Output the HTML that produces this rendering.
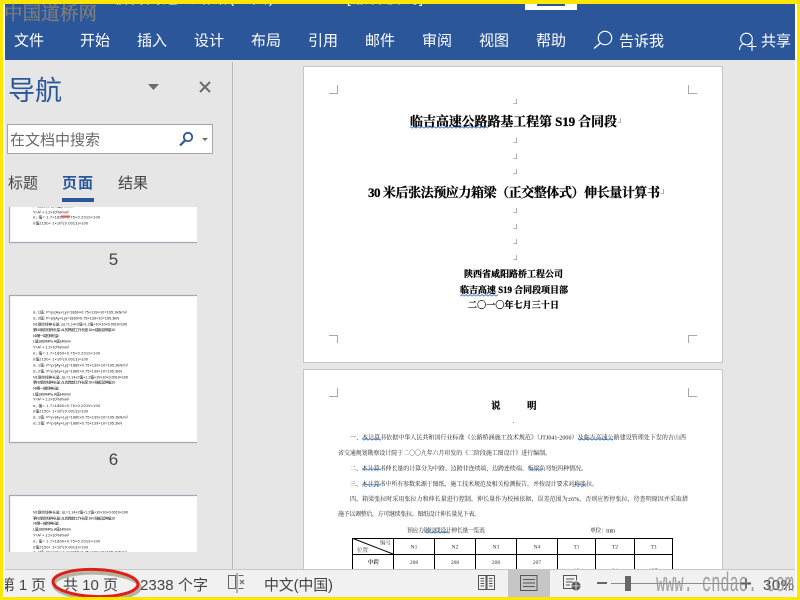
<!DOCTYPE html>
<html lang="zh-CN">
<head>
<meta charset="utf-8">
<title>Word</title>
<style>
html,body{margin:0;padding:0;background:#fff;width:800px;height:600px;overflow:hidden}
svg{display:block;position:absolute;left:0;top:0}
text{font-family:"Liberation Sans","Noto Sans CJK SC",sans-serif;white-space:pre}
.tab{fill:#fff;font-size:15px}
.st{fill:#444;font-size:15px}
.th{fill:#111;font-size:3.7px}
.d{fill:#222;font-family:"Liberation Serif","Noto Serif CJK SC",serif;font-size:6px}
.b{fill:#000;stroke:#000;stroke-width:.25px;font-family:"Liberation Serif","Noto Serif CJK SC",serif;font-weight:bold}
.c{fill:#333;font-family:"Liberation Serif","Noto Serif CJK SC",serif;font-size:5.5px;text-anchor:middle}
</style>
</head>
<body>
<svg width="800" height="600" viewBox="0 0 800 600" xmlns="http://www.w3.org/2000/svg">
<defs>
<pattern id="w" width="4" height="3" patternUnits="userSpaceOnUse"><path d="M0 2.2L2 .6L4 2.2" fill="none" stroke="#3f78c8" stroke-width=".9"/></pattern>
<clipPath id="t1"><rect x="9" y="207" width="188" height="36"/></clipPath>
<clipPath id="t3"><rect x="9" y="495" width="188" height="57"/></clipPath>
</defs>

<rect width="800" height="600" fill="#fff"/>
<rect x="5" y="4" width="790" height="56" fill="#2b579a"/>
<rect x="5" y="60" width="790" height="510" fill="#e6e6e6"/>

<!-- clipped title bar -->
<text x="113" y="3" fill="#fff" font-size="15" textLength="310" lengthAdjust="spacing">临吉高速公路路(正文) - Word  [兼容模式]</text>
<rect x="525" y="4" width="52" height="6" fill="#fff"/>
<rect x="537" y="4" width="28" height="2" fill="#2b579a"/>

<!-- ribbon tabs -->
<text class="tab" x="14" y="45.500" textLength="30">文件</text>
<text class="tab" x="80" y="45.500" textLength="30">开始</text>
<text class="tab" x="137" y="45.500" textLength="30">插入</text>
<text class="tab" x="194" y="45.500" textLength="30">设计</text>
<text class="tab" x="251" y="45.500" textLength="30">布局</text>
<text class="tab" x="308" y="45.500" textLength="30">引用</text>
<text class="tab" x="365" y="45.500" textLength="30">邮件</text>
<text class="tab" x="422" y="45.500" textLength="30">审阅</text>
<text class="tab" x="479" y="45.500" textLength="30">视图</text>
<text class="tab" x="536" y="45.500" textLength="30">帮助</text>
<text class="tab" x="619" y="46" textLength="45">告诉我</text>
<text class="tab" x="761" y="46" textLength="30">共享</text>
<circle cx="605" cy="38" r="6.700" fill="none" stroke="#fff" stroke-width="1.200"/>
<path d="M600.500 43L594 48.500" stroke="#fff" stroke-width="1.400" fill="none"/>
<circle cx="746.500" cy="39" r="5.800" fill="none" stroke="#fff" stroke-width="1.100"/>
<path d="M739.500 50c0-4 2.500-6 5-6.500M749 44.500h1" stroke="#fff" stroke-width="1.100" fill="none"/>
<path d="M752 42v9M747.500 46.500h9" stroke="#fff" stroke-width="1.100" fill="none"/>

<!-- navigation pane -->
<text x="8" y="100" fill="#2b579a" font-size="27" textLength="54">导航</text>
<path d="M148 84h11l-5.500 6z" fill="#6b6b6b"/>
<path d="M200 82l10 10M210 82l-10 10" stroke="#6b6b6b" stroke-width="2" fill="none"/>
<rect x="7.500" y="124.500" width="205" height="29" fill="#fff" stroke="#a6a6a6"/>
<text x="10" y="145" fill="#6a6a6a" font-size="15" textLength="90">在文档中搜索</text>
<circle cx="188" cy="137" r="4.200" fill="none" stroke="#2b579a" stroke-width="1.800"/>
<path d="M185 140.500l-5 5" stroke="#2b579a" stroke-width="2.200" fill="none"/>
<path d="M202 138h6l-3 3z" fill="#6b6b6b"/>
<text x="8" y="188" fill="#444" font-size="15" textLength="30">标题</text>
<text x="62" y="188" fill="#2b579a" font-size="15" font-weight="bold" textLength="31">页面</text>
<text x="118" y="188" fill="#444" font-size="15" textLength="30">结果</text>
<rect x="62" y="198" width="32" height="4" fill="#2b579a"/>

<!-- thumbnail 5 -->
<rect x="9" y="207" width="188" height="36" fill="#fff"/>
<path d="M9.500 207V242.500H197" fill="none" stroke="#a2a7b3" stroke-width="1.200"/>
<g clip-path="url(#t1)">
<text class="th" x="33" y="207.500" textLength="40">fᶜ=1860MPa, A值140mm</text>
<text class="th" x="33" y="213.300" textLength="36">Y=A² × 1.2×10⁵N/mm²</text>
<text class="th" x="33" y="218.700" textLength="67">σ₁ 值= 1.7×1860×0.75×0.2019×100</text>
<text class="th" x="33" y="224.500" textLength="55">σ值2150+ 1×10⁵(0.0013)×100</text>
<rect x="61" y="215.500" width="9" height="2" fill="#f25555"/>
</g>

<!-- thumbnail 6 -->
<rect x="9" y="295" width="188" height="148" fill="#fff"/>
<path d="M197 295.500H9.500V442.500H197" fill="none" stroke="#a2a7b3" stroke-width="1.200"/>
<g>
<text class="th" x="33" y="313.500" textLength="94">σ₁ 1值: P=p/(Ay×Ly)=1860×0.75×139×10=195.3kN/m²</text>
<text class="th" x="33" y="319.500" textLength="86">σ₂ 2值: P=p/(Ay×Ly)=1860×0.75×139×10=195.3kN</text>
<text class="th" x="33" y="325.500" textLength="94">N1钢绞线伸长量: ΔL=1.14×2值×1.2值×10×10×0.0019×100</text>
<text class="th" x="33" y="331" textLength="82">第N2钢绞线伸长量: ΔL的跨越工作长度 10m 锚板延伸量10</text>
<text class="th" x="33" y="337" textLength="26">N3 第一端的伸长量:</text>
<text class="th" x="33" y="342.500" textLength="38">L值1860MPa, A值140mm</text>
<text class="th" x="33" y="348.500" textLength="36">Y=A² × 1.2×10⁵N/mm²</text>
<text class="th" x="33" y="354.500" textLength="67">σ₁ 值= 1.7×1860×0.75×0.2019×100</text>
<text class="th" x="33" y="360.500" textLength="55">σ值2150+ 1×10⁵(0.0013)×100</text>
<text class="th" x="33" y="366.500" textLength="95">σ₁ 1值: P=p/(Ay×Ly)=1860×0.75×139×10=195.3kN/m²</text>
<text class="th" x="33" y="372.500" textLength="89">σ₂ 2值: P=p/(Ay×Ly)=1860×0.75×139×10=195.3kN</text>
<text class="th" x="33" y="378.500" textLength="95">N1钢绞线伸长量: ΔL=1.14×2值×1.2值×10×10×0.0019×100</text>
<text class="th" x="33" y="383.500" textLength="82">第N2钢绞线伸长量: ΔL的跨越工作长度 10m 锚板延伸量10</text>
<text class="th" x="33" y="389.500" textLength="26">N3 第一端的伸长量:</text>
<text class="th" x="33" y="395.500" textLength="38">L值1860MPa, A值140mm</text>
<text class="th" x="33" y="400.500" textLength="36">Y=A² × 1.2×10⁵N/mm²</text>
<text class="th" x="33" y="407" textLength="67">σ₁ 值= 1.7×1860×0.75×0.2019×100</text>
<text class="th" x="33" y="412.500" textLength="55">σ值2150+ 1×10⁵(0.0013)×100</text>
<text class="th" x="33" y="418.500" textLength="95">σ₁ 1值: P=p/(Ay×Ly)=1860×0.75×139×10=195.3kN/m²</text>
<text class="th" x="33" y="424.500" textLength="89">σ₂ 2值: P=p/(Ay×Ly)=1860×0.75×139×10=195.3kN</text>
</g>
<text x="113.500" y="265" fill="#444" font-size="17" text-anchor="middle">5</text>
<text x="113.500" y="465" fill="#444" font-size="17" text-anchor="middle">6</text>

<!-- thumbnail 7 -->
<rect x="9" y="495" width="188" height="57" fill="#fff"/>
<path d="M197 495.500H9.500V552" fill="none" stroke="#a2a7b3" stroke-width="1.200"/>
<g clip-path="url(#t3)">
<text class="th" x="33" y="513.500" textLength="95">N1钢绞线伸长量: ΔL=1.14×2值×1.2值×10×10×0.0019×100</text>
<text class="th" x="33" y="519.500" textLength="82">第N2钢绞线伸长量: ΔL的跨越工作长度 10m 锚板延伸量10</text>
<text class="th" x="33" y="524.500" textLength="26">N3 第一端的伸长量:</text>
<text class="th" x="33" y="530.500" textLength="38">L值1860MPa, A值140mm</text>
<text class="th" x="33" y="536.500" textLength="36">Y=A² × 1.2×10⁵N/mm²</text>
<text class="th" x="33" y="542.500" textLength="67">σ₁ 值= 1.7×1860×0.75×0.2019×100</text>
<text class="th" x="33" y="548.500" textLength="55">σ值2150+ 1×10⁵(0.0013)×100</text>
<text class="th" x="33" y="553.500" textLength="94">σ₁ 1值: P=p/(Ay×Ly)=1860×0.75×139×10=195.3kN/m²</text>
</g>
<rect x="232" y="62" width="1" height="507" fill="#b9b9b9"/>

<!-- page 1 -->
<rect x="303.500" y="66.500" width="419" height="296" fill="#fff" stroke="#c6c6c6"/>
<path d="M329 93.500h8.500V85M697 93.500h-8.500V85M329 335.500h8.500V343M697 335.500h-8.500V343" fill="none" stroke="#a9a9a9"/>
<path d="M516.500 99v4.500h-3M516.500 138v4.500h-3M516.500 154v4.500h-3M516.500 169v4.500h-3M516.500 208v4.500h-3M516.500 224v4.500h-3M516.500 239v4.500h-3M516.500 255v4.500h-3M620.500 118v4.500h-3M663.500 189v4.500h-3" fill="none" stroke="#9a9a9a" stroke-width=".8"/>
<text class="b" x="410" y="126" font-size="13" textLength="207">临吉高速公路路基工程第 S19 合同段</text>
<text class="b" x="368" y="197" font-size="13" textLength="292">30 米后张法预应力箱梁（正交整体式）伸长量计算书</text>
<text class="b" x="464" y="277" font-size="9" textLength="99">陕西省咸阳路桥工程公司</text>
<text class="b" x="460" y="293" font-size="9" textLength="108">临吉高速 S19 合同段项目部</text>
<text class="b" x="468" y="308" font-size="9" textLength="91">二〇一〇年七月三十日</text>
<rect x="410" y="126.500" width="78" height="3" fill="url(#w)"/>
<rect x="460" y="293.500" width="38" height="3" fill="url(#w)"/>

<!-- page 2 -->
<rect x="303.500" y="369.500" width="419" height="210" fill="#fff" stroke="#c6c6c6"/>
<path d="M329 396.500h8.500V388M697 396.500h-8.500V388" fill="none" stroke="#a9a9a9"/>
<text class="b" x="491" y="409" font-size="9.500">说</text>
<text class="b" x="527" y="409" font-size="9.500">明</text>
<rect x="513" y="422" width="1" height="1" fill="#999"/>
<text class="d" x="350" y="439.500" textLength="336">一、本计算书依据中华人民共和国行业标准《公路桥涵施工技术规范》（JTJ041-2000）及临吉高速公路建设管理处下发的吉山西</text>
<text class="d" x="338" y="455" textLength="213">省交通规划勘察设计院于二〇〇九年六月印发的《二阶段施工图设计》进行编制。</text>
<text class="d" x="350" y="470.500" textLength="237">二、本计算书伸长量的计算分为中跨、边跨非连续端、边跨连续端、板梁负弯矩四种情况。</text>
<text class="d" x="350" y="486" textLength="248">三、本计算书中所有参数来源于图纸、施工技术规范及相关检测报告，并按设计要求对称张拉。</text>
<text class="d" x="350" y="501" textLength="338">四、箱梁张拉时采用张拉力和伸长量进行控制，伸长量作为校核依据，误差范围为±6%，否则应暂停张拉，待查明原因并采取措</text>
<text class="d" x="338" y="516" textLength="142">施予以调整后，方可继续张拉。图纸设计伸长量见下表。</text>
<text class="d" x="407" y="532.500" textLength="78">预应力钢绞线设计伸长量一览表</text>
<text class="d" x="590" y="532.500" textLength="25">单位：mm</text>
<rect x="362" y="437.500" width="19" height="3" fill="url(#w)"/>
<rect x="578" y="437.500" width="35" height="3" fill="url(#w)"/>
<rect x="362" y="468.500" width="19" height="3" fill="url(#w)"/>
<rect x="530" y="468.500" width="13" height="3" fill="url(#w)"/>
<rect x="362" y="484" width="19" height="3" fill="url(#w)"/>
<rect x="573" y="484" width="13" height="3" fill="url(#w)"/>
<rect x="425" y="531" width="24" height="3" fill="url(#w)"/>
<!-- table -->
<path d="M352.500 580V538.500H672.500V580M352.500 554.500H672.500M393.500 538V580M434.500 538V580M475.500 538V580M516.500 538V580M557.500 538V580M595.500 538V580M634.500 538V580M353 538.500L393 554" fill="none" stroke="#000" stroke-width="1"/>
<text class="c" x="385.500" y="544.500">编号</text>
<text class="c" x="362.500" y="552">位置</text>
<text class="c" x="414" y="548.500">N1</text>
<text class="c" x="455" y="548.500">N2</text>
<text class="c" x="496" y="548.500">N3</text>
<text class="c" x="537" y="548.500">N4</text>
<text class="c" x="576.500" y="548.500">T1</text>
<text class="c" x="615" y="548.500">T2</text>
<text class="c" x="653.500" y="548.500">T3</text>
<text class="c" x="373.500" y="564" font-weight="bold">中跨</text>
<text class="c" x="414" y="564">208</text>
<text class="c" x="455" y="564">208</text>
<text class="c" x="496" y="564">208</text>
<text class="c" x="537" y="564">207</text>
<text class="c" x="576.500" y="572">18</text>
<text class="c" x="615" y="572">34</text>
<text class="c" x="653.500" y="572">127</text>

<!-- status bar -->
<rect x="5" y="569" width="790" height="28" fill="#f1f1f1"/>
<rect x="5" y="569" width="790" height="1" fill="#c6c6c6"/>
<text class="st" x="0" y="590" textLength="46">第 1 页</text>
<text class="st" x="63" y="590" textLength="55">共 10 页</text>
<text class="st" x="140" y="590" textLength="68">2338 个字</text>
<path d="M228.500 575.500h7v13h-7zM238.500 575.500h5M238.500 588.500h5M237 573v20" fill="none" stroke="#666" stroke-width="1"/>
<path d="M240 580l4 4M244 580l-4 4" stroke="#666" stroke-width="1.200" fill="none"/>
<text class="st" x="264" y="590" textLength="69">中文(中国)</text>

<rect x="508" y="570" width="42" height="27" fill="#c6c6c6"/>
<path d="M478.500 575.500h7.500v14h-7.500zM487 575.500h7.500v14H487zM480.500 578.500h3.500M480.500 581h3.500M480.500 583.500h3.500M480.500 586h3.500M489 578.500h3.500M489 581h3.500M489 583.500h3.500M489 586h3.500" fill="none" stroke="#555" stroke-width="1"/>
<path d="M520.500 575.500h16.500v15h-16.500zM523 579.500h12M523 583h12M523 586.500h12" fill="none" stroke="#555" stroke-width="1"/>
<path d="M577 588.500h-13.500v-13h13v5M566 579h8M566 582h7M566 585h4" fill="none" stroke="#555" stroke-width="1"/>
<circle cx="576" cy="586" r="4.500" fill="#555"/>
<path d="M572 586h8M576 582v8" stroke="#f1f1f1" stroke-width=".8"/>
<rect x="597" y="582" width="10" height="2" fill="#666"/>
<rect x="611" y="583" width="130" height="1" fill="#8a8a8a"/>
<rect x="625" y="576" width="6" height="15" fill="#666"/>
<path d="M741 583.500h10M746 578.500v10" stroke="#555" stroke-width="2" fill="none"/>
<text class="st" x="763" y="590" textLength="31">30%</text>

<!-- watermarks -->
<text x="656" y="591" fill="#8c8c8c" fill-opacity=".8" font-size="27" textLength="138" lengthAdjust="spacingAndGlyphs" style="font-family:'Liberation Mono',monospace">www. cndao. com</text>

<!-- red ellipse -->
<ellipse cx="97" cy="586" rx="43" ry="13" fill="none" stroke="#8a8a70" stroke-opacity=".6" stroke-width="3.500" transform="rotate(2 97 586)"/>
<ellipse cx="95.500" cy="583" rx="42.500" ry="13.500" fill="none" stroke="#dc1f17" stroke-width="3" transform="rotate(2 95.500 583)"/>

<!-- frame -->
<rect x="3" y="4" width="2" height="593" fill="#fff"/>
<rect x="795" y="4" width="2" height="593" fill="#fff"/>
<rect x="0" y="0" width="800" height="4" fill="#ffe600"/>
<rect x="0" y="0" width="3" height="600" fill="#ffe600"/>
<rect x="797" y="0" width="3" height="600" fill="#ffe600"/>
<rect x="0" y="597" width="800" height="3" fill="#ffe600"/>

<text x="4" y="20" fill="#7d7d7d" stroke="#7d7d7d" stroke-width=".4" font-size="18.500" textLength="93" style="font-family:'Liberation Serif','Noto Serif CJK SC',serif">中国道桥网</text>
</svg>
</body>
</html>
